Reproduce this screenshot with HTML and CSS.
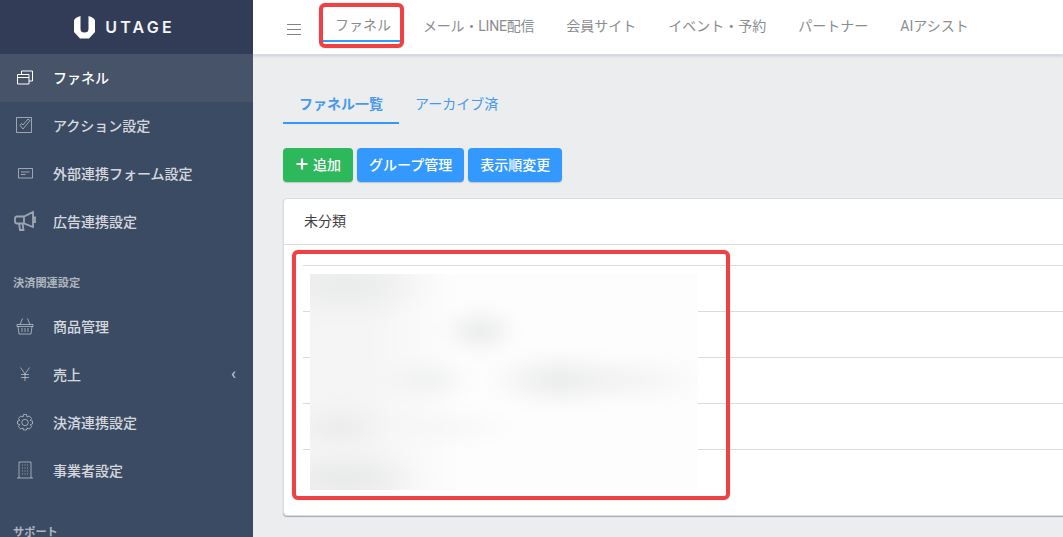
FILE: index.html
```html
<!DOCTYPE html>
<html lang="ja">
<head>
    <meta charset="UTF-8">
    <title>UTAGE ファネル</title>
    <link rel="stylesheet" href="styles.css">
</head>
<body>
    <!-- Sidebar -->
    <aside class="sidebar">
        <div class="brand">
            <svg class="brand-mark" width="21" height="23" viewBox="0 0 21 23"><path d="M0 5Q0 2 6.500 0V13Q6.500 16.500 10.500 16.500 14.500 16.500 14.500 13V0Q21 2 21 5V16L15 22.500H6L0 16Z" fill="#fff"/></svg>
            <span class="brand-name">UTAGE</span>
        </div>

        <a class="nav-item active" href="#">
            <span class="nav-icon"><svg width="20" height="20" viewBox="0 0 20 20"><path d="M2.500 7.500H14V17H2.500ZM2.500 10.500H14M6.500 7.500V4H17.500V14H14"/></svg></span>
            ファネル
        </a>
        <a class="nav-item" href="#">
            <span class="nav-icon"><svg width="20" height="20" viewBox="0 0 20 20"><path d="M16.500 2.500V17.500H1.500V2.500H16.500M5 10.500 8 14 15 5.500 13 4 8 10 6.500 8.500Z"/></svg></span>
            アクション設定
        </a>
        <a class="nav-item" href="#">
            <span class="nav-icon"><svg width="20" height="20" viewBox="0 0 20 20"><path d="M3.500 5.500H17.500V15H3.500ZM6 9H14.500M6 11.500H10.500"/></svg></span>
            外部連携フォーム設定
        </a>
        <a class="nav-item" href="#">
            <span class="nav-icon"><svg width="22" height="22" viewBox="0 0 22 22"><path class="thick" d="M3 6.500H10L19 2V17L10 13.500H3C1.500 13.500 1 12.500 1 11.500V8.500C1 7.500 1.500 6.500 3 6.500ZM5 13.500 6 20H9.500L8.500 13.500M10 6.500V13.500M19 7.500H21V12H19"/></svg></span>
            広告連携設定
        </a>

        <div class="nav-title">決済関連設定</div>
        <a class="nav-item" href="#">
            <span class="nav-icon"><svg width="20" height="20" viewBox="0 0 20 20"><path d="M2 8.500H18V10.500H2ZM3 10.500 4 18H16L17 10.500M5 8.500 7.500 2.500M15 8.500 12.500 2.500M7 12V16M10 12V16M13 12V16"/></svg></span>
            商品管理
        </a>
        <a class="nav-item has-arrow" href="#">
            <span class="nav-icon"><svg width="20" height="20" viewBox="0 0 20 20"><path d="M5.500 3.500 10 10 14.500 3.500M10 10V17M6 10.500H14M6 13.500H14"/></svg></span>
            売上
            <span class="arrow">‹</span>
        </a>
        <a class="nav-item" href="#">
            <span class="nav-icon"><svg width="20" height="20" viewBox="0 0 20 20"><path d="M8.500 2.500H11.500L12 5 14.300 4 16.500 6.300 15.300 8.500 17.500 9V12L15.300 12.500 16.500 14.700 14.300 17 12 16 11.500 18H8.500L8 16 5.700 17 3.500 14.700 4.700 12.500 2.500 12V9L4.700 8.500 3.500 6.300 5.700 4 8 5Z"/><circle cx="10" cy="10.500" r="3.200"/></svg></span>
            決済連携設定
        </a>
        <a class="nav-item" href="#">
            <span class="nav-icon"><svg width="20" height="20" viewBox="0 0 20 20"><path d="M4 18V2H16V18M2 18H18"/><path class="dots" d="M7 5H8M9.500 5H10.500M12 5H13M7 8H8M9.500 8H10.500M12 8H13M7 11H8M9.500 11H10.500M12 11H13M7 14H8M9.500 14H10.500M12 14H13"/></svg></span>
            事業者設定
        </a>

        <div class="nav-title">サポート</div>
    </aside>

    <div class="wrapper">
        <!-- Top menu -->
        <header class="topbar">
            <button class="burger" type="button"><span></span><span></span><span></span></button>
            <nav class="top-menu">
                <a class="current" href="#">ファネル</a>
                <a class="tight" href="#">メール・LINE配信</a>
                <a href="#">会員サイト</a>
                <a href="#">イベント・予約</a>
                <a href="#">パートナー</a>
                <a href="#">AIアシスト</a>
            </nav>
        </header>

        <main class="content">
            <div class="tabs">
                <a class="tab selected" href="#">ファネル一覧</a>
                <a class="tab" href="#">アーカイブ済</a>
            </div>

            <div class="actions">
                <a class="btn btn-green" href="#"><svg width="14" height="14" viewBox="0 0 14 14"><path d="M7 1.500V12.500M1.500 7H12.500" stroke="#fff" stroke-width="2.200"/></svg>追加</a>
                <a class="btn btn-blue" href="#">グループ管理</a>
                <a class="btn btn-blue" href="#">表示順変更</a>
            </div>

            <section class="card">
                <div class="card-header">未分類</div>
                <div class="card-body">
                    <div class="row"></div>
                    <div class="row"></div>
                    <div class="row"></div>
                    <div class="row"></div>
                    <div class="row"></div>
                </div>
            </section>
        </main>
    </div>

    <!-- Annotations over the screenshot -->
    <div class="blurred"></div>
    <div class="mark mark-tab"></div>
    <div class="mark mark-list"></div>
</body>
</html>
```

FILE: styles.css
```css
/* General Reset */
* {
    margin: 0;
    padding: 0;
    box-sizing: border-box;
    font-family: Roboto, "Noto Sans CJK JP", sans-serif;
}

body {
    display: flex;
    height: 100vh;
    overflow: hidden;
    position: relative;
    background-color: #ebedef;
    font-size: 14px;
    color: #3c4b64;
}

a {
    text-decoration: none;
}

/* Sidebar */
.sidebar {
    width: 253px;
    flex-shrink: 0;
    background-color: #3c4b64;
    overflow: hidden;
}

.brand {
    height: 54px;
    display: flex;
    align-items: center;
    justify-content: center;
    gap: 10px;
    padding-right: 4px;
    background-color: #323c56;
}

.brand-name {
    font-family: Inter, sans-serif;
    font-size: 16px;
    font-weight: 600;
    letter-spacing: 3.2px;
    color: #f4f5f7;
}

.nav-item {
    height: 48px;
    padding-bottom: 2px;
    display: flex;
    align-items: center;
    font-weight: 500;
    color: rgba(255, 255, 255, 0.8);
}

.nav-item.active {
    background-color: #465368;
    color: #fff;
}

.nav-icon {
    width: 53px;
    padding-right: 3px;
    display: flex;
    justify-content: center;
}

.nav-icon svg {
    fill: none;
    stroke: rgba(255, 255, 255, 0.5);
    stroke-width: 1;
}

.nav-icon .thick {
    stroke-width: 1.8;
}

.nav-icon .dots {
    stroke-width: 1.2;
}

.active .nav-icon svg {
    stroke: #fff;
}

.arrow {
    margin-left: auto;
    margin-right: 17px;
    font-size: 16px;
    line-height: 1;
    color: rgba(255, 255, 255, 0.7);
}

.nav-title {
    height: 57px;
    padding: 29px 0 0 13px;
    font-size: 11.2px;
    line-height: 17px;
    font-weight: 700;
    color: rgba(255, 255, 255, 0.6);
}

/* Top menu */
.wrapper {
    flex: 1;
    min-width: 0;
    overflow: hidden;
}

.topbar {
    height: 54px;
    display: flex;
    background-color: #fff;
    box-shadow: 0 1px 0 #d8dbe0, 0 2px 3px rgba(60, 75, 100, 0.2);
}

.burger {
    width: 66px;
    padding-left: 34px;
    padding-top: 4px;
    display: flex;
    flex-direction: column;
    justify-content: center;
    gap: 4px;
    background: none;
    border: none;
}

.burger span {
    display: block;
    width: 14px;
    height: 1px;
    background-color: #7f8287;
}

.top-menu {
    display: flex;
}

.top-menu a {
    height: 42px;
    padding: 0 16px;
    line-height: 52px;
    color: #8a8d90;
    white-space: nowrap;
}

.top-menu a.current {
    margin: 0 3px;
    padding: 0 13px;
    line-height: 51px;
    box-shadow: inset 0 -2px 0 #39f;
}

.top-menu a.tight {
    letter-spacing: -0.2px;
}

/* Page content */
.content {
    padding: 30px 0 0 30px;
}

.tabs {
    height: 41px;
    margin-bottom: 23px;
    display: flex;
}

.tab {
    height: 40px;
    padding: 0 16px;
    line-height: 41px;
    color: #4799eb;
}

.tab.selected {
    font-weight: 700;
    border-bottom: 2px solid #39f;
}

.actions {
    display: flex;
    gap: 4px;
    margin-bottom: 16px;
}

.btn {
    height: 34px;
    padding: 0 12px 2px;
    display: flex;
    align-items: center;
    gap: 4px;
    border-radius: 4px;
    font-weight: 500;
    color: #fff;
    box-shadow: 0 1px 1px rgba(60, 75, 100, 0.25);
}

.btn-green {
    background-color: #2eb85c;
}

.btn-blue {
    background-color: #39f;
}

.card {
    width: 900px;
    height: 318px;
    background-color: #fff;
    border: 1px solid #d8dbe0;
    border-radius: 4px;
    box-shadow: 0 1px 1px rgba(60, 75, 100, 0.4);
}

.card-header {
    height: 46px;
    padding-left: 20px;
    line-height: 45px;
    color: #3f4044;
    border-bottom: 1px solid #d8dbe0;
}

.card-body {
    padding: 20px 20px 20px 19px;
}

.row {
    height: 46px;
    border-top: 1px solid #d8dbe0;
}

/* Blurred list names */
.blurred {
    position: absolute;
    left: 310px;
    top: 274px;
    width: 388px;
    height: 216px;
    overflow: hidden;
    background-color: #fdfdfd;
}

.blurred::before {
    content: "";
    position: absolute;
    inset: -20px;
    filter: blur(8px);
    background-image:
        radial-gradient(ellipse 38px 24px at 190px 77px, #e6e7e7, transparent),
        radial-gradient(ellipse 48px 22px at 137px 126px, #eeefef, transparent),
        radial-gradient(ellipse 75px 28px at 270px 126px, #e8e9e9, transparent),
        radial-gradient(ellipse 75px 24px at 345px 126px, #f2f2f2, transparent),
        radial-gradient(ellipse 50px 24px at 50px 173px, #e9eae9, transparent),
        radial-gradient(ellipse 80px 18px at 150px 173px, #f5f5f5, transparent),
        radial-gradient(ellipse 85px 30px at 55px 225px, #e6e7e7, transparent),
        radial-gradient(ellipse 90px 34px at 55px 32px, #e8e9e9, transparent),
        linear-gradient(to right, #f4f5f4 80px, #fdfdfd 170px);
}

/* Red annotation frames */
.mark {
    position: absolute;
    border: 4px solid #ef4044;
    border-radius: 6px;
    box-shadow: 0 0 1px rgba(60, 60, 60, 0.6);
}

.mark-tab {
    left: 319px;
    top: 3px;
    width: 85px;
    height: 45px;
}

.mark-list {
    left: 292px;
    top: 250px;
    width: 438px;
    height: 250px;
}
```
